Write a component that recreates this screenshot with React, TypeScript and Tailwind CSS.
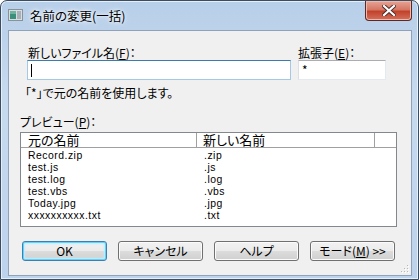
import React from "react";

const rows: [string, string][] = [
  ["Record.zip", ".zip"],
  ["test.js", ".js"],
  ["test.log", ".log"],
  ["test.vbs", ".vbs"],
  ["Today.jpg", ".jpg"],
  ["xxxxxxxxxx.txt", ".txt"],
];

function Btn({ children, def }: { children: React.ReactNode; def?: boolean }) {
  return (
    <div
      className={
        "w-[85px] h-[20px] rounded-[3px] border flex items-center justify-center text-[12px] leading-[12px] text-black bg-[linear-gradient(#f2f2f2_0%,#ebebeb_49%,#dddddd_50%,#cfcfcf_100%)] " +
        (def
          ? "border-[#3c7fb1] shadow-[inset_0_0_0_1px_#5fd4fc,inset_0_0_2px_2px_#c3ecfc]"
          : "border-[#707070] shadow-[inset_0_0_0_1px_#fbfbfb]")
      }
    >
      {children}
    </div>
  );
}

export default function App() {
  return (
    <div className="w-[419px] h-[280px] font-['Noto_Sans_CJK_JP',sans-serif] [font-feature-settings:'palt'] text-black">
      <div className="w-[419px] h-[280px] rounded-t-[7px] border border-[#3b4d61] shadow-[inset_0_0_0_1px_#e6eff9] bg-[linear-gradient(180deg,#b8cfe9_0%,#c6daef_35%,#bdd3ec_100%)] flex flex-col pl-[7px] pr-[6px] pb-[3px]">
        <div className="h-[29px] flex items-start">
          <div className="mt-[8px]">
            <svg width="15" height="12" viewBox="0 0 15 12">
              <rect x="0.5" y="0.5" width="14" height="11" fill="#d8dde2" stroke="#8a9299" />
              <rect x="2" y="2" width="6" height="8" fill="#3c8f7a" />
              <rect x="2" y="2" width="6" height="3" fill="#6fb3a0" />
              <rect x="9" y="2" width="4" height="8" fill="#a9b1b8" />
            </svg>
          </div>
          <div className="ml-[7px] mt-[7px] text-[12.5px] leading-[15px] [text-shadow:0_0_6px_#ffffff,0_0_3px_#ffffff]">
            名前の変更(一括)
          </div>
          <div className="ml-auto w-[47px] h-[20px] rounded-b-[4px] border border-t-0 border-[#5b2a24] bg-[linear-gradient(180deg,#e8a395_0%,#d47865_45%,#c2432c_55%,#d3705c_100%)] shadow-[inset_0_0_0_1px_#f0b8aa] flex items-center justify-center">
            <svg width="14" height="11" viewBox="0 0 14 11">
              <path d="M2 1 L12 10 M12 1 L2 10" stroke="#4a2a28" strokeWidth="4" strokeLinecap="square" />
              <path d="M2 1 L12 10 M12 1 L2 10" stroke="#ffffff" strokeWidth="2.2" strokeLinecap="square" />
            </svg>
          </div>
        </div>
        <div className="relative flex-1 bg-[#f0f0f0] border border-[#8ea3bb] flex flex-col pl-[11px] pt-[15px] text-[12px]">
          <div className="flex">
            <div className="ml-[7px] w-[264px]">
              <div className="h-[14px] leading-[14px] ml-[1px]">
                新しいファイル名(<span className="underline">F</span>)：
              </div>
              <div className="h-[20px] bg-white border border-[#a4c9e3] border-t-[#3d7bad] flex items-center pl-[3px]">
                <div className="w-[1px] h-[13px] bg-black" />
              </div>
            </div>
            <div className="ml-[7px] w-[88px]">
              <div className="h-[14px] leading-[14px]">
                拡張子(<span className="underline">E</span>)：
              </div>
              <div className="h-[20px] bg-white border border-[#e3e9ef] border-t-[#abadb3] border-l-[#dbdfe6] flex items-center pl-[3px] leading-[14px]">
                *
              </div>
            </div>
          </div>
          <div className="ml-[5px] mt-[6px] h-[14px] leading-[14px]">「*」で元の名前を使用します。</div>
          <div className="mt-[15px] h-[14px] leading-[14px]">
            プレビュー(<span className="underline">P</span>)：
          </div>
          <div className="mt-[3px] w-[377px] h-[95px] bg-white border border-[#828790] flex flex-col">
            <div className="h-[15px] flex border-b border-[#a0a0a0] bg-white text-[13px]">
              <div className="w-[176px] h-full border-r border-[#a0a0a0] pl-[7px] leading-[14px]">元の名前</div>
              <div className="w-[178px] h-full border-r border-[#a0a0a0] pl-[6px] leading-[14px]">新しい名前</div>
              <div className="flex-1" />
            </div>
            <div className="pt-[2px] flex flex-col text-[10.4px] tracking-[0.5px] font-['Liberation_Sans',sans-serif]">
              {rows.map(([a, b]) => (
                <div key={a} className="h-[12px] flex leading-[12px]">
                  <div className="w-[177px] pl-[7px]">{a}</div>
                  <div className="pl-[6px]">{b}</div>
                </div>
              ))}
            </div>
          </div>
          <div className="mt-[14px] ml-[2px] flex gap-[11px]">
            <Btn def>OK</Btn>
            <Btn>キャンセル</Btn>
            <Btn>ヘルプ</Btn>
            <Btn>
              モード(<span className="underline">M</span>) &gt;&gt;
            </Btn>
          </div>
          <div className="absolute right-[2px] bottom-[2px]">
            <svg width="10" height="10" viewBox="0 0 10 10">
              {[[8, 2], [8, 5], [5, 5], [8, 8], [5, 8], [2, 8]].map(([x, y], i) => (
                <g key={i}>
                  <rect x={x} y={y} width="1" height="1" fill="#b8b8b8" />
                  <rect x={x + 1} y={y + 1} width="1" height="1" fill="#ffffff" />
                </g>
              ))}
            </svg>
          </div>
        </div>
      </div>
    </div>
  );
}
